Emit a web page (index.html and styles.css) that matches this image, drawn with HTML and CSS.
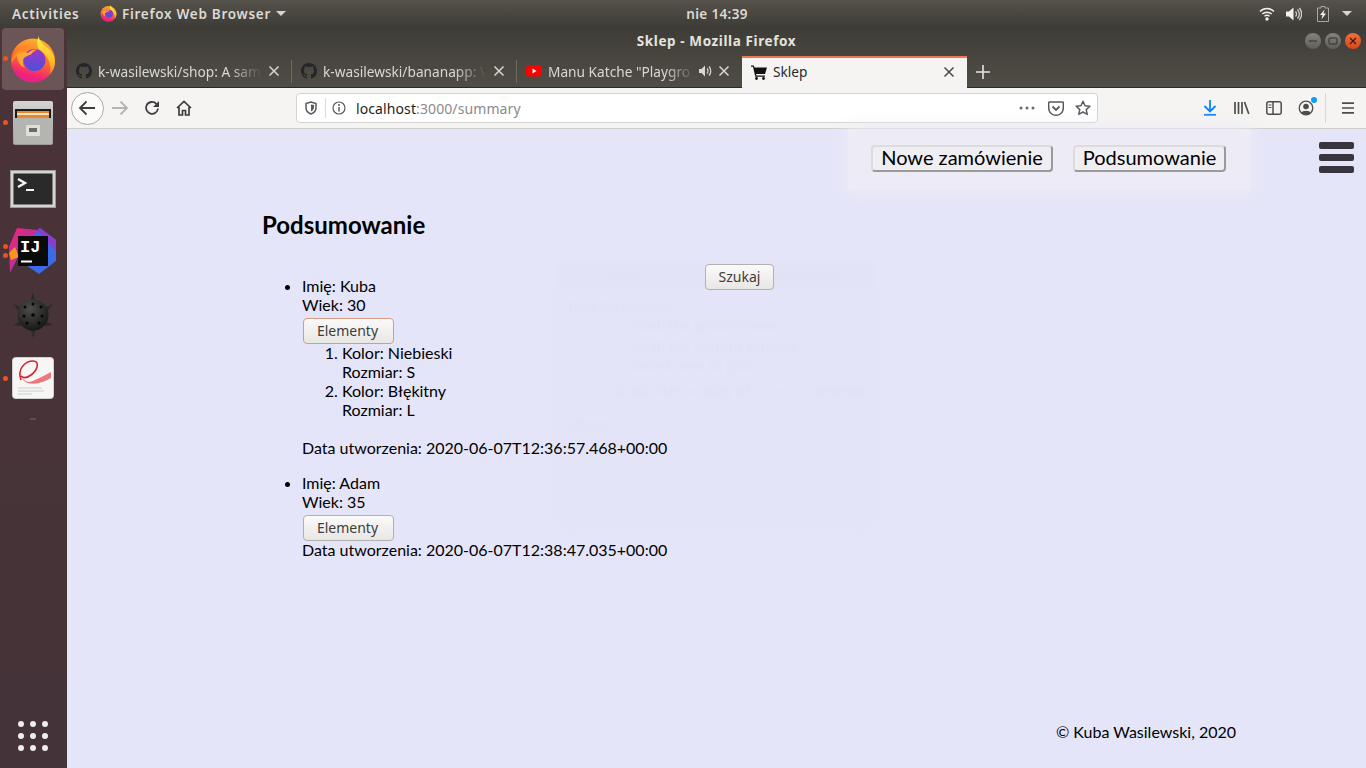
FILE: index.html
```html
<!DOCTYPE html>
<html lang="pl">
<head>
<meta charset="utf-8">
<title>Sklep - Mozilla Firefox</title>
<link rel="stylesheet" href="styles.css">
</head>
<body>
<svg class="defs" width="0" height="0" aria-hidden="true">
  <defs>
    <linearGradient id="ffBody" x1="0.7" y1="0" x2="0.4" y2="1">
      <stop offset="0" stop-color="#ffb52e"/><stop offset="0.5" stop-color="#ff6a2a"/><stop offset="0.85" stop-color="#f0227a"/><stop offset="1" stop-color="#e3238f"/>
    </linearGradient>
    <linearGradient id="ffFlame" x1="0.5" y1="0" x2="0.6" y2="1">
      <stop offset="0" stop-color="#fff23c"/><stop offset="0.6" stop-color="#ffc42e"/><stop offset="1" stop-color="#ff8a2a"/>
    </linearGradient>
    <linearGradient id="ffBall" x1="0.5" y1="0" x2="0.5" y2="1">
      <stop offset="0" stop-color="#a335c4"/><stop offset="1" stop-color="#4a50dc"/>
    </linearGradient>
    <linearGradient id="cab" x1="0" y1="0" x2="0" y2="1">
      <stop offset="0" stop-color="#d4d4d0"/><stop offset="1" stop-color="#9a9a96"/>
    </linearGradient>
    <linearGradient id="ijA" x1="0" y1="0" x2="1" y2="1">
      <stop offset="0" stop-color="#f0246e"/><stop offset="1" stop-color="#8a3bd0"/>
    </linearGradient>
    <radialGradient id="mineBall" cx="0.4" cy="0.3" r="0.8">
      <stop offset="0" stop-color="#4c4c4a"/><stop offset="1" stop-color="#111"/>
    </radialGradient>
    <symbol id="firefox" viewBox="0 0 46 47">
      <circle cx="23" cy="24.500" r="22" fill="url(#ffBody)"/>
      <path d="M29 0C28.500 5 33 8 37 11.500C42.500 16 45.500 21 45 27C44.700 31 43 35 40 38C42 29 38 20 31 15C27 12 26 6 29 0Z" fill="url(#ffFlame)"/>
      <path d="M13 7C13.500 11 11 13 8 15C4 18 1.500 22 1.500 27C5 21 9 18 14 18L20 14C17 13 14 11 13 7Z" fill="#ff8a26"/>
      <circle cx="24.500" cy="24" r="11" fill="url(#ffBall)"/>
      <path d="M7 19C11 15 15 15.500 18 17C20 14.500 24 13 27 13.500C24 15 22 17 21 18.500C18 19.500 15 20.500 13 23C12.500 26 13 30 15 32C10 30 7 25 7 19Z" fill="#ffa832"/>
    </symbol>
    <symbol id="github" viewBox="0 0 16 16">
      <path d="M8 0C3.580 0 0 3.580 0 8c0 3.540 2.290 6.530 5.470 7.590.4.070.55-.17.55-.38 0-.19-.01-.82-.01-1.490-2.010.37-2.530-.49-2.690-.94-.09-.23-.48-.94-.82-1.130-.28-.15-.68-.52-.01-.53.63-.01 1.080.58 1.230.82.720 1.210 1.870.87 2.330.66.070-.52.280-.87.510-1.070-1.780-.2-3.640-.89-3.640-3.950 0-.87.310-1.590.820-2.150-.08-.2-.36-1.020.08-2.120 0 0 .67-.21 2.200.82.640-.18 1.320-.27 2-.27s1.360.09 2 .27c1.530-1.040 2.200-.82 2.200-.82.440 1.100.16 1.920.08 2.120.51.560.82 1.270.82 2.150 0 3.070-1.870 3.750-3.650 3.950.29.250.54.730.54 1.480 0 1.070-.01 1.930-.01 2.200 0 .21.150.46.550.38A8.010 8.010 0 0016 8c0-4.420-3.580-8-8-8z" fill="#26262a"/>
    </symbol>
    <symbol id="tabx" viewBox="0 0 12 12">
      <path d="M1.500 1.500l9 9M10.500 1.500l-9 9" stroke="currentColor" stroke-width="1.500" fill="none"/>
    </symbol>
  </defs>
</svg>

<header class="topbar">
  <div class="top-left">
    <span class="activities">Activities</span>
    <span class="app-menu">
      <svg class="app-logo" width="17" height="17"><use href="#firefox"/></svg>
      <span>Firefox Web Browser</span>
      <i class="caret"></i>
    </span>
  </div>
  <div class="clock">nie 14:39</div>
  <div class="top-right">
    <svg class="wifi" width="16" height="14" viewBox="0 0 16 14"><path d="M1 4.500C5 .5 11 .5 15 4.500M3.300 7C6 4.500 10 4.500 12.700 7M5.500 9.300C7 8 9 8 10.500 9.300" fill="none" stroke="#f2f1ef" stroke-width="1.500"/><circle cx="8" cy="12" r="1.700" fill="#f2f1ef"/></svg>
    <svg width="16" height="14" viewBox="0 0 16 14"><path d="M0 4.500h3L7.500.5v13L3 9.500H0z" fill="#f2f1ef"/><path d="M9.500 4.500a3.500 3.500 0 010 5M11.500 2.500a6.500 6.500 0 010 9M13.300 1a9 9 0 010 12" fill="none" stroke="#cfcecb" stroke-width="1.300"/></svg>
    <svg class="batt" width="12" height="16" viewBox="0 0 12 16"><path d="M4 .5h4v1.500h3.500v13.500H.5V2H4z" fill="none" stroke="#a8a7a3" stroke-width="1"/><path d="M7.500 3.500L3 9h2.500L4.500 13.500 9 7.500H6.500z" fill="#f2f1ef"/></svg>
    <i class="caret"></i>
  </div>
</header>

<div class="desk">
  <nav class="dock">
    <div class="slot active"><i class="run-dot"></i>
      <svg width="46" height="47"><use href="#firefox"/></svg>
    </div>
    <div class="slot"><i class="run-dot"></i>
      <svg width="42" height="46" viewBox="0 0 42 46">
        <rect x="1" y="1" width="40" height="44" rx="2" fill="url(#cab)"/>
        <rect x="3" y="9" width="36" height="9" fill="#1d1a18"/>
        <rect x="5" y="11" width="32" height="7" fill="#e8862e"/>
        <rect x="5" y="13" width="32" height="2" fill="#f6e2c0"/>
        <rect x="2" y="18" width="38" height="26" fill="#b4b4b0"/>
        <rect x="14" y="25" width="14" height="11" rx="1" fill="#dededa"/>
        <rect x="17" y="28" width="8" height="4" fill="#6a6a68"/>
      </svg>
    </div>
    <div class="slot term">
      <svg width="46" height="38" viewBox="0 0 46 38">
        <rect x="0.500" y="0.500" width="45" height="37" fill="#d4d4d0" stroke="#9c9c98"/>
        <rect x="3.500" y="3.500" width="39" height="31" fill="#2a2a2a"/>
        <path d="M8 9l7 4-7 4" fill="none" stroke="#f4f4f4" stroke-width="2.400"/>
        <rect x="16" y="19" width="8" height="2" fill="#f4f4f4"/>
      </svg>
    </div>
    <div class="slot"><i class="run-dot upper"></i><i class="run-dot lower"></i>
      <svg width="48" height="48" viewBox="0 0 48 48">
        <path d="M8 1L28 3L31 14L12 24L1 46L0 20Z" fill="url(#ijA)"/>
        <path d="M0 26L6 20L10 30L2 33Z" fill="#f7941d"/>
        <path d="M31 1L47 13V34L30 47L14 36L22 12Z" fill="#3b6be8"/>
        <path d="M28 3L31 1L47 13V25Z" fill="#8a3bd0"/>
        <rect x="9" y="9" width="30" height="30" fill="#0a0a0a"/>
        <text class="ij" x="11" y="25">IJ</text>
        <rect x="12" y="33.500" width="11" height="2" fill="#fff"/>
      </svg>
    </div>
    <div class="slot">
      <svg width="40" height="46" viewBox="0 0 40 46">
        <path d="M20 0l2.500 10h-5zM20 46l-3-10h6zM0 12l10 4-3 5zM40 12l-10 4 3 5zM0 33l10-5-2 6zM40 33l-10-5 2 6z" fill="#2a2a28"/>
        <circle cx="20" cy="23" r="15.500" fill="url(#mineBall)"/>
        <g fill="#050505"><circle cx="12" cy="15" r="1.500"/><circle cx="20" cy="12" r="1.500"/><circle cx="28" cy="15" r="1.500"/><circle cx="20" cy="23" r="1.800"/><circle cx="11" cy="24" r="1.500"/><circle cx="29" cy="24" r="1.500"/><circle cx="14" cy="31" r="1.500"/><circle cx="26" cy="31" r="1.500"/></g>
      </svg>
    </div>
    <div class="slot evince"><i class="run-dot"></i>
      <svg width="42" height="42" viewBox="0 0 42 42">
        <rect x="0.500" y="0.500" width="41" height="41" rx="3" fill="#f6f6f4" stroke="#d0d0cc"/>
        <path d="M9 23C5 12 13 4 21 4C28 4 26 13 19 18C15 21 12 22 9 19" fill="none" stroke="#d8222a" stroke-width="1.600"/>
        <path d="M9 18C12 26 18 26 23 23C29 20 34 18 39 15L39 21C32 25 24 28 16 26C12 25 10 22 9 18Z" fill="#e8414a" opacity="0.7"/>
        <path d="M6 31h24M6 34h26M6 37h14" stroke="#c4c4c0" stroke-width="0.800"/>
      </svg>
    </div>
    <div class="slot-mini"></div>
    <div class="grid-btn">
      <i></i><i></i><i></i><i></i><i></i><i></i><i></i><i></i><i></i>
    </div>
  </nav>

  <div class="window">
    <div class="titlebar">
      <span class="win-title">Sklep - Mozilla Firefox</span>
      <div class="win-btns">
        <span class="win-btn"><svg width="10" height="10" viewBox="0 0 10 10"><path d="M1 5h8" stroke="#2f2e2a" stroke-width="1"/></svg></span>
        <span class="win-btn"><svg width="10" height="10" viewBox="0 0 10 10"><rect x="1" y="2" width="8" height="6" rx="1" fill="none" stroke="#2f2e2a"/></svg></span>
        <span class="win-btn close"><svg width="10" height="10" viewBox="0 0 10 10"><path d="M2 2l6 6M8 2l-6 6" stroke="#3a1a0c" stroke-width="1.200"/></svg></span>
      </div>
    </div>

    <div class="tabbar">
      <div class="tab sep">
        <svg class="favicon" width="16" height="16"><use href="#github"/></svg>
        <span class="tab-label">k-wasilewski/shop: A sam</span>
        <svg class="tab-x" width="12" height="12"><use href="#tabx"/></svg>
      </div>
      <div class="tab sep">
        <svg class="favicon" width="16" height="16"><use href="#github"/></svg>
        <span class="tab-label">k-wasilewski/bananapp: \</span>
        <svg class="tab-x" width="12" height="12"><use href="#tabx"/></svg>
      </div>
      <div class="tab">
        <svg class="favicon" width="16" height="16" viewBox="0 0 16 16"><rect y="2.500" width="16" height="11" rx="3" fill="#f00"/><path d="M6.500 5.500v5l4-2.500z" fill="#fff"/></svg>
        <span class="tab-label">Manu Katche "Playgro</span>
        <svg class="tab-snd" width="13" height="12" viewBox="0 0 13 12"><path d="M0 4h2.500L6 .5v11L2.500 8H0z" fill="#d8d7d3"/><path d="M8 3.500a3.500 3.500 0 010 5M10 1.500a6.500 6.500 0 010 9" fill="none" stroke="#d8d7d3" stroke-width="1.200"/></svg>
        <svg class="tab-x" width="12" height="12"><use href="#tabx"/></svg>
      </div>
      <div class="tab current">
        <svg class="favicon" width="16" height="16" viewBox="0 0 16 16"><path d="M0 1.500h2.800l.7 2H16l-2 6.500H5l.4 1.500H14v1.300H4.300L2 2.800H0z" fill="#111"/><circle cx="5.500" cy="14.500" r="1.400" fill="#111"/><circle cx="12.500" cy="14.500" r="1.400" fill="#111"/></svg>
        <span class="tab-label plain">Sklep</span>
        <svg class="tab-x" width="12" height="12"><use href="#tabx"/></svg>
      </div>
      <svg class="new-tab" width="14" height="14" viewBox="0 0 14 14"><path d="M7 0v14M0 7h14" stroke="#e4e3df" stroke-width="1.600"/></svg>
    </div>

    <div class="toolbar">
      <div class="nav-group">
        <span class="back-btn"><svg width="18" height="16" viewBox="0 0 18 16"><path d="M17 8H2M8.500 1.500L2 8l6.500 6.500" fill="none" stroke="#3d3d3f" stroke-width="1.800"/></svg></span>
        <span class="tool"><svg width="18" height="16" viewBox="0 0 18 16"><path d="M1 8h15M9.500 1.500L16 8l-6.500 6.500" fill="none" stroke="#b4b4b4" stroke-width="1.800"/></svg></span>
        <span class="tool"><svg width="16" height="16" viewBox="0 0 16 16"><path d="M14 8.500A6 6 0 112.500 5.500 6 6 0 0112.500 4L14.500 6" fill="none" stroke="#3d3d3f" stroke-width="1.800"/><path d="M15 1v6H9z" fill="#3d3d3f"/></svg></span>
        <span class="tool"><svg width="16" height="16" viewBox="0 0 16 16"><path d="M1 8l7-6.500L15 8M3 7v8h3.500v-4.500h3V15H13V7" fill="none" stroke="#3d3d3f" stroke-width="1.700"/></svg></span>
      </div>
      <div class="urlbar">
        <svg class="shield" width="12" height="14" viewBox="0 0 12 14"><path d="M6 1L1 2.500V7c0 3 2.500 5 5 6 2.500-1 5-3 5-6V2.500z" fill="none" stroke="#5a5a5c" stroke-width="1.500"/><path d="M6 3.500v7c1.500-.8 3-2 3-4V4z" fill="#5a5a5c"/></svg>
        <i class="url-sep"></i>
        <svg class="info" width="14" height="14" viewBox="0 0 14 14"><circle cx="7" cy="7" r="6" fill="none" stroke="#5a5a5c" stroke-width="1.200"/><path d="M7 6v4.500" stroke="#5a5a5c" stroke-width="1.500"/><circle cx="7" cy="3.900" r="1" fill="#5a5a5c"/></svg>
        <span class="url-text"><span class="host">localhost</span>:3000/summary</span>
        <svg class="url-dots" width="16" height="4" viewBox="0 0 16 4"><circle cx="2" cy="2" r="1.500" fill="#6a6a6c"/><circle cx="8" cy="2" r="1.500" fill="#6a6a6c"/><circle cx="14" cy="2" r="1.500" fill="#6a6a6c"/></svg>
        <svg class="url-pocket" width="16" height="15" viewBox="0 0 16 15"><path d="M1.500 1h13a.8.800 0 01.800.800V7a7.300 7.300 0 01-14.600 0V1.800A.8.800 0 011.500 1z" fill="none" stroke="#5a5a5c" stroke-width="1.500"/><path d="M4.500 5.500L8 9l3.500-3.500" fill="none" stroke="#5a5a5c" stroke-width="1.800"/></svg>
        <svg class="url-star" width="16" height="16" viewBox="0 0 16 16"><path d="M8 1.300l2 4.500 4.900.5-3.700 3.300 1.100 4.800L8 12l-4.300 2.400 1.100-4.800L1.100 6.300 6 5.800z" fill="none" stroke="#5a5a5c" stroke-width="1.500" stroke-linejoin="round"/></svg>
      </div>
      <div class="tool-group">
        <span class="tool"><svg width="14" height="16" viewBox="0 0 14 16"><path d="M7 0v11M1.500 6L7 11.500 12.500 6" fill="none" stroke="#0a84ff" stroke-width="1.800"/><path d="M1 14.800h12" stroke="#0a84ff" stroke-width="1.800"/></svg></span>
        <span class="tool"><svg width="16" height="14" viewBox="0 0 16 14"><path d="M1 1v12M4.500 1v12M8 1v12M10.500 1l4.300 12" fill="none" stroke="#4d4d4f" stroke-width="1.700"/></svg></span>
        <span class="tool"><svg width="16" height="14" viewBox="0 0 16 14"><rect x="0.800" y="0.800" width="14.400" height="12.400" rx="2" fill="none" stroke="#4d4d4f" stroke-width="1.500"/><path d="M7 1v12" stroke="#4d4d4f" stroke-width="1.500"/><path d="M2.500 4h3M2.500 6.500h3" stroke="#4d4d4f"/></svg></span>
        <span class="tool account"><svg width="16" height="16" viewBox="0 0 16 16"><circle cx="8" cy="8" r="6.800" fill="none" stroke="#4d4d4f" stroke-width="1.300"/><circle cx="8" cy="6.500" r="2.800" fill="#4d4d4f"/><path d="M3.200 13c1-3 8.600-3 9.600 0a7 7 0 01-9.600 0z" fill="#4d4d4f"/></svg><i class="acct-dot"></i></span>
        <i class="tool-sep"></i>
        <span class="tool"><svg width="14" height="12" viewBox="0 0 14 12"><path d="M1 1.200h12M1 6h12M1 10.800h12" stroke="#4d4d4f" stroke-width="1.700"/></svg></span>
      </div>
    </div>

    <main class="page">
      <div class="page-head">
        <div class="menu-box">
          <button class="menu-btn" type="button">Nowe zamówienie</button>
          <button class="menu-btn" type="button">Podsumowanie</button>
        </div>
        <div class="burger"><i></i><i></i><i></i></div>
      </div>

      <section class="summary">
        <h2 class="summary-title">Podsumowanie</h2>
        <ul class="orders">
          <li class="order">
            Imię: Kuba<br>
            Wiek: 30<br>
            <button class="gtk-btn focus" type="button">Elementy</button>
            <ol class="items">
              <li>Kolor: Niebieski<br>Rozmiar: S</li>
              <li>Kolor: Błękitny<br>Rozmiar: L</li>
            </ol>
            Data utworzenia: 2020-06-07T12:36:57.468+00:00
          </li>
          <li class="order">
            Imię: Adam<br>
            Wiek: 35<br>
            <button class="gtk-btn" type="button">Elementy</button><br>
            Data utworzenia: 2020-06-07T12:38:47.035+00:00
          </li>
        </ul>
      </section>

      <footer class="foot">© Kuba Wasilewski, 2020</footer>

      <div class="ghost">
        <div class="ghost-head"><span>Cancel</span><span>Screenshot</span></div>
        <div class="ghost-body">
          <p class="ghost-h">Take Screenshot</p>
          <p class="ghost-opt">Grab the whole screen</p>
          <p class="ghost-opt">Grab the current window</p>
          <p class="ghost-opt">Select area to grab</p>
          <p class="ghost-delay"><span>Grab after a delay of</span><span>+</span><span>seconds</span></p>
          <p class="ghost-h">Effects</p>
        </div>
      </div>
      <button class="gtk-btn search" type="button">Szukaj</button>
    </main>
  </div>
</div>
</body>
</html>
```
FILE: styles.css
```css
* { box-sizing: border-box; }
html, body { margin: 0; padding: 0; height: 100%; overflow: hidden; }
body {
  display: flex;
  flex-direction: column;
  width: 1366px;
  height: 768px;
  font-family: "Noto Sans", "Open Sans", sans-serif;
  background: #3d3b35;
}
.defs { position: absolute; }
i { display: block; font-style: normal; }

/* Top panel */
.topbar {
  height: 27px;
  flex: none;
  display: flex;
  align-items: center;
  justify-content: space-between;
  position: relative;
  padding: 0 14px 0 12px;
  background: linear-gradient(#55524b, #3e3c36);
  color: #dcdad5;
  font-size: 13.5px;
  font-weight: 600;
  letter-spacing: 0.72px;
}
.top-left { display: flex; align-items: center; }
.activities { width: 88px; }
.app-menu { display: flex; align-items: center; gap: 5px; }
.app-logo { display: block; }
.caret {
  width: 0; height: 0;
  border-left: 5px solid transparent;
  border-right: 5px solid transparent;
  border-top: 5px solid #d6d4cf;
}
.clock { position: absolute; left: 0; right: 0; text-align: center; padding-left: 68px; letter-spacing: 0.35px; }
.top-right { display: flex; align-items: center; gap: 12px; position: relative; }
.wifi { margin-right: -1px; }
.batt { margin: 0 1px 0 3px; }

.desk { flex: 1; display: flex; min-height: 0; }

/* Dock */
.dock {
  width: 67px;
  flex: none;
  display: flex;
  flex-direction: column;
  align-items: flex-start;
  gap: 2px;
  padding: 1px 0 0 2px;
  background: linear-gradient(#4b3338, #443338);
}
.slot {
  position: relative;
  width: 62px;
  height: 62px;
  flex: none;
  display: flex;
  align-items: center;
  justify-content: center;
  border-radius: 4px;
}
.slot.active { background: #6b5557; }
.slot.term svg { margin-top: 4px; }
.slot.evince svg { margin-bottom: 2px; }
.run-dot {
  position: absolute;
  left: 1px;
  top: 28px;
  width: 5px;
  height: 5px;
  border-radius: 50%;
  background: #e95420;
}
.run-dot.upper { top: 24px; }
.run-dot.lower { top: 33px; }
.slot-mini { width: 6px; height: 2px; margin: 6px 0 0 28px; background: #5e4c50; }
.grid-btn {
  margin: auto 0 17px 16px;
  display: grid;
  grid-template-columns: repeat(3, 6px);
  grid-auto-rows: 6px;
  gap: 6px;
}
.grid-btn i { border-radius: 50%; background: #efedeb; }
.ij { font-family: "Liberation Mono", monospace; font-weight: 700; font-size: 17px; fill: #fff; }

/* Window */
.window { flex: 1; display: flex; flex-direction: column; min-width: 0; }
.titlebar {
  height: 29px;
  flex: none;
  position: relative;
  display: flex;
  align-items: center;
  justify-content: center;
  padding-bottom: 2px;
  background: linear-gradient(#3e3c36, #47453e);
  color: #e4e3df;
  font-size: 13.5px;
  font-weight: 700;
  letter-spacing: 0.6px;
}
.win-btns { position: absolute; right: 5px; top: 6px; display: flex; gap: 4px; }
.win-btn {
  width: 16px; height: 16px;
  border-radius: 50%;
  display: flex; align-items: center; justify-content: center;
  background: linear-gradient(#85837d, #5f5d57);
}
.win-btn.close { background: linear-gradient(#f0703c, #d9461a); }

/* Tabs */
.tabbar {
  height: 32px;
  flex: none;
  display: flex;
  align-items: stretch;
  background: linear-gradient(#47453e, #504d46);
  border-bottom: 1px solid #2b2a26;
  color: #d8d7d3;
  font-size: 13.7px;
}
.tab {
  width: 225px;
  flex: none;
  display: flex;
  align-items: center;
  padding: 0 12px 1px 9px;
  position: relative;
}
.tab.sep::after {
  content: "";
  position: absolute;
  right: 0; top: 4px; bottom: 4px;
  width: 1px;
  background: #6d6b64;
}
.tab.current {
  background: #f5f4f2;
  color: #2a2a2e;
  border-top: 2px solid #ea7a52;
  height: 32px;
  padding-bottom: 3px;
}
.favicon { flex: none; margin-right: 6px; }
.tab-label {
  flex: 1;
  min-width: 0;
  white-space: nowrap;
  overflow: hidden;
  -webkit-mask-image: linear-gradient(to right, #000 80%, transparent);
  mask-image: linear-gradient(to right, #000 80%, transparent);
}
.tab-label.plain { -webkit-mask-image: none; mask-image: none; }
.tab-snd { flex: none; margin: 0 0 0 4px; }
.tab-x { flex: none; margin-left: 6px; color: #d8d7d3; }
.tab.current .tab-x { color: #4a4a4c; }
.new-tab { align-self: center; margin-left: 9px; }

/* Toolbar */
.toolbar {
  height: 41px;
  flex: none;
  display: flex;
  align-items: center;
  background: #f5f4f2;
  border-bottom: 1px solid #cfcec9;
}
.nav-group { width: 229px; flex: none; display: flex; align-items: center; padding-left: 4px; }
.back-btn {
  width: 33px; height: 33px;
  flex: none;
  display: flex; align-items: center; justify-content: center;
  border-radius: 50%;
  background: #fbfbfa;
  border: 1px solid #a9a9a7;
}
.back-btn svg { margin-left: -1px; }
.tool {
  width: 32px; height: 32px;
  flex: none;
  display: flex; align-items: center; justify-content: center;
  position: relative;
}
.urlbar {
  width: 802px;
  height: 30px;
  flex: none;
  display: flex;
  align-items: center;
  background: #fff;
  border: 1px solid #d4d3cf;
  border-radius: 4px;
  padding: 0 6px 0 8px;
  font-size: 14px;
  color: #8a8a8c;
}
.url-sep { width: 1px; height: 20px; background: #dcdbd8; margin: 0 6px 0 8px; }
.url-text { margin-left: 10px; flex: 1; white-space: nowrap; letter-spacing: 0.1px; }
.host { color: #1f1f22; }
.url-pocket { margin-left: 13px; }
.url-star { margin-left: 11px; }
.tool-group { display: flex; align-items: center; margin-left: 96px; }
.tool-sep { width: 1px; height: 30px; background: #d8d7d3; margin: 0 6px 0 3px; }
.acct-dot {
  position: absolute;
  top: 5px; right: 5px;
  width: 6px; height: 6px;
  border-radius: 50%;
  background: #0a9dff;
}

/* Page */
.page {
  flex: 1;
  min-height: 0;
  position: relative;
  display: flex;
  flex-direction: column;
  background: #e5e5f9;
  color: #000;
  font-family: Lato, "Liberation Sans", sans-serif;
  font-size: 16px;
}
.page-head { display: flex; justify-content: flex-end; align-items: flex-start; flex: none; }
.menu-box {
  display: flex;
  gap: 20px;
  padding: 16px 24px 18px 23px;
  margin-right: 69px;
  background: #ecebf6;
  box-shadow: 0 0 16px 2px #ecebf6;
}
.menu-btn {
  height: 27px;
  padding: 0 0 5px;
  font-family: inherit;
  font-size: 20px;
  line-height: 1;
  white-space: nowrap;
  color: #000;
  background: #efeff3;
  border: 2px solid;
  border-color: #dcdcdc #9a9a9a #9a9a9a #dcdcdc;
  border-radius: 4px;
}
.menu-btn:first-child { width: 182px; }
.menu-btn:nth-child(2) { width: 153px; }
.burger {
  display: flex;
  flex-direction: column;
  gap: 5px;
  margin: 13px 12px 0 0;
}
.burger i { width: 35px; height: 7px; border-radius: 2px; background: #38353f; }

.summary { padding-left: 195px; flex: none; position: relative; z-index: 1; }
.summary-title { margin: 20px 0 0; font-size: 24px; line-height: 29px; font-weight: 700; }
.orders { margin: 37px 0 0; padding: 0 0 0 40px; }
.order { line-height: 19px; margin-bottom: 16px; }
.order:last-child { margin-bottom: 0; }
.items { margin: 0 0 19px; padding: 0 0 0 40px; }
.gtk-btn {
  display: inline-block;
  vertical-align: top;
  height: 26px;
  width: 91px;
  margin: 4px 0 -1px 1px;
  padding: 0 2px 0 0;
  font-family: "Noto Sans", sans-serif;
  font-size: 14px;
  line-height: 22px;
  color: #3d3d3b;
  background: linear-gradient(#fbfafa, #e9e7e4);
  border: 1px solid #b3b1ad;
  border-radius: 4px;
}
.gtk-btn.focus { border-color: #d79a82; }

.foot {
  margin-top: auto;
  margin-bottom: 27px;
  padding-right: 130px;
  text-align: right;
  font-size: 16px;
  line-height: 19px;
}

/* Fading screenshot dialog over the page */
.ghost {
  position: absolute;
  left: 489px;
  top: 131px;
  width: 320px;
  height: 270px;
  border-radius: 12px;
  background: #e4e4f8;
  box-shadow: 0 0 6px 1px #e4e4f8;
  color: #e2e2f6;
  font-family: "Noto Sans", sans-serif;
  font-size: 14px;
}
.ghost-head {
  height: 30px;
  display: flex;
  align-items: center;
  justify-content: space-between;
  padding: 0 36px 0 40px;
  background: #e3e3f7;
  border-radius: 12px 12px 0 0;
}
.ghost-body { padding: 7px 11px; }
.ghost-h { margin: 0; line-height: 19px; }
.ghost-opt { margin: 0 0 1px 66px; line-height: 19px; }
.ghost-delay { margin: 6px 0 15px 48px; display: flex; justify-content: space-between; line-height: 19px; }
.gtk-btn.search {
  position: absolute;
  left: 638px;
  top: 135px;
  width: 69px;
  margin: 0;
  padding: 0;
  z-index: 2;
}
```
